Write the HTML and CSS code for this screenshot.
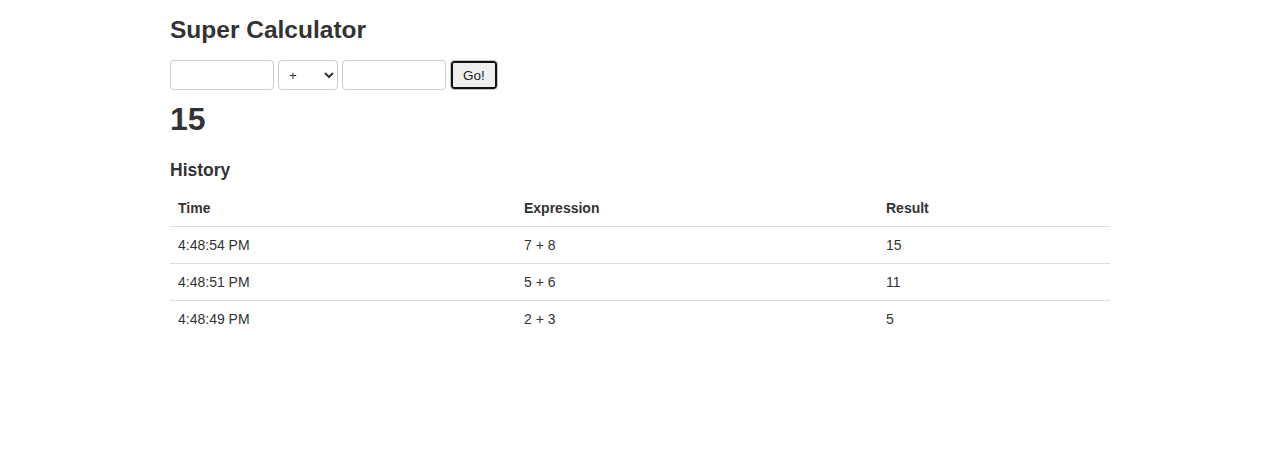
FILE: index.html
```html
<!DOCTYPE html>
<html>
<head>
<meta charset="utf-8">
<title>Super Calculator</title>
<link rel="stylesheet" href="styles.css">
</head>
<body>
<div class="container">
  <h2 class="title">Super Calculator</h2>
  <form class="calc">
    <input class="num" type="text">
    <select class="op">
      <option>+</option>
      <option>-</option>
      <option>*</option>
      <option>/</option>
    </select>
    <input class="num" type="text">
    <button class="go" type="button">Go!</button>
  </form>
  <h1 class="result">15</h1>
  <h3 class="history-title">History</h3>
  <table class="history">
    <thead>
      <tr>
        <th class="col-time">Time</th>
        <th class="col-expr">Expression</th>
        <th class="col-res">Result</th>
      </tr>
    </thead>
    <tbody>
      <tr><td>4:48:54 PM</td><td>7 + 8</td><td>15</td></tr>
      <tr><td>4:48:51 PM</td><td>5 + 6</td><td>11</td></tr>
      <tr><td>4:48:49 PM</td><td>2 + 3</td><td>5</td></tr>
    </tbody>
  </table>
</div>
</body>
</html>
```

FILE: styles.css
```css
html, body {
  margin: 0;
  padding: 0;
  background: #fff;
}
body {
  font-family: "Liberation Sans", Arial, Helvetica, sans-serif;
  font-size: 14px;
  line-height: 20px;
  color: #333;
}
.container {
  width: 940px;
  margin: 0 auto;
}
.title {
  font-size: 24.5px;
  line-height: 28px;
  font-weight: bold;
  margin: 16px 0 0 0;
}
.calc {
  display: flex;
  gap: 4px;
  margin-top: 16px;
  height: 30px;
}
.num {
  box-sizing: border-box;
  width: 104px;
  height: 30px;
  border: 1px solid #ccc;
  border-radius: 4px;
  padding: 2px 6px;
  font-family: "Liberation Sans", Arial, sans-serif;
  font-size: 13.33px;
  background: #fff;
}
.op {
  box-sizing: border-box;
  width: 60px;
  height: 30px;
  border: 1px solid #ccc;
  border-radius: 4px;
  padding: 0 4px 0 6px;
  font-family: "Liberation Sans", Arial, sans-serif;
  font-size: 13.33px;
  color: #333;
  background: #fff;
}
.go {
  box-sizing: border-box;
  width: 48px;
  height: 30px;
  border: 1px solid #c4c4c4;
  border-radius: 4px;
  box-shadow: inset 0 0 0 2px #111;
  background: #efefef;
  font-family: "Liberation Sans", Arial, sans-serif;
  font-size: 13.5px;
  color: #222;
  padding: 0;
}
.result {
  font-size: 32px;
  line-height: 36px;
  font-weight: bold;
  margin: 11px 0 0 0;
}
.history-title {
  font-size: 17.5px;
  line-height: 22px;
  font-weight: bold;
  margin: 22px 0 0 0;
}
.history {
  width: 940px;
  border-collapse: collapse;
  border-spacing: 0;
  margin-top: 9px;
  table-layout: fixed;
}
.history th,
.history td {
  box-sizing: border-box;
  text-align: left;
  padding: 8px;
  line-height: 20px;
  vertical-align: top;
}
.history th {
  font-weight: bold;
  border-bottom: 1px solid #ddd;
}
.history tbody tr + tr td {
  border-top: 1px solid #ddd;
}
.col-time { width: 346px; }
.col-expr { width: 362px; }
.col-res { width: 232px; }
```
